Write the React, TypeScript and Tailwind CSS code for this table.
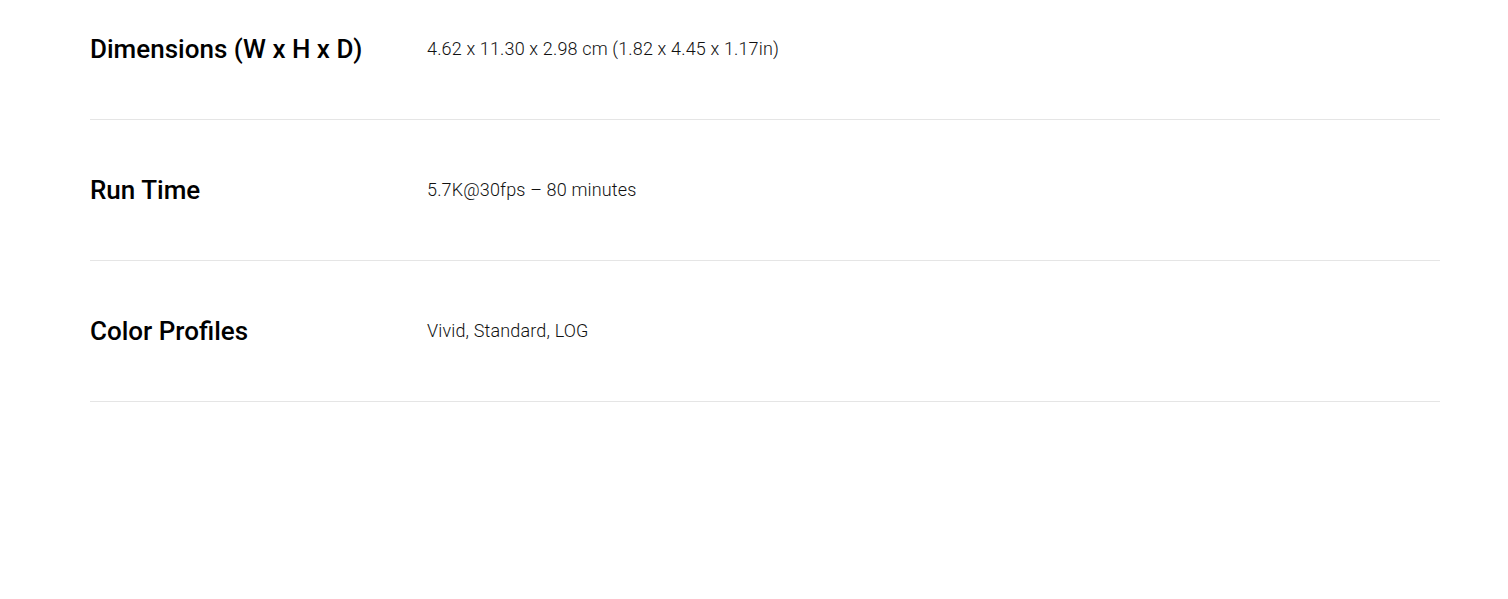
export default function App() {
    const specs = [
        { label: "Dimensions (W x H x D)", value: "4.62 x 11.30 x 2.98 cm (1.82 x 4.45 x 1.17in)" },
        { label: "Run Time", value: "5.7K@30fps – 80 minutes" },
        { label: "Color Profiles", value: "Vivid, Standard, LOG" },
    ];

    return (
        <div className="min-h-[599px] bg-white px-[90px] pr-[68px] font-['Roboto',sans-serif]">
            {specs.map((spec, i) => (
                <div
                    key={spec.label}
                    className={`flex items-center border-b border-[#e5e5e5] ${i === 0 ? 'pt-[33px] pb-[54px]' : 'pt-[54px] pb-[54px]'}`}
                >
                    <div className="w-[337px] flex-none text-[26px] leading-[32px] font-medium text-black">
                        {spec.label}
                    </div>
                    <div className="text-[18px] leading-[32px] font-light tracking-[0.15px] text-[#111]">
                        {spec.value}
                    </div>
                </div>
            ))}
        </div>
    );
}
